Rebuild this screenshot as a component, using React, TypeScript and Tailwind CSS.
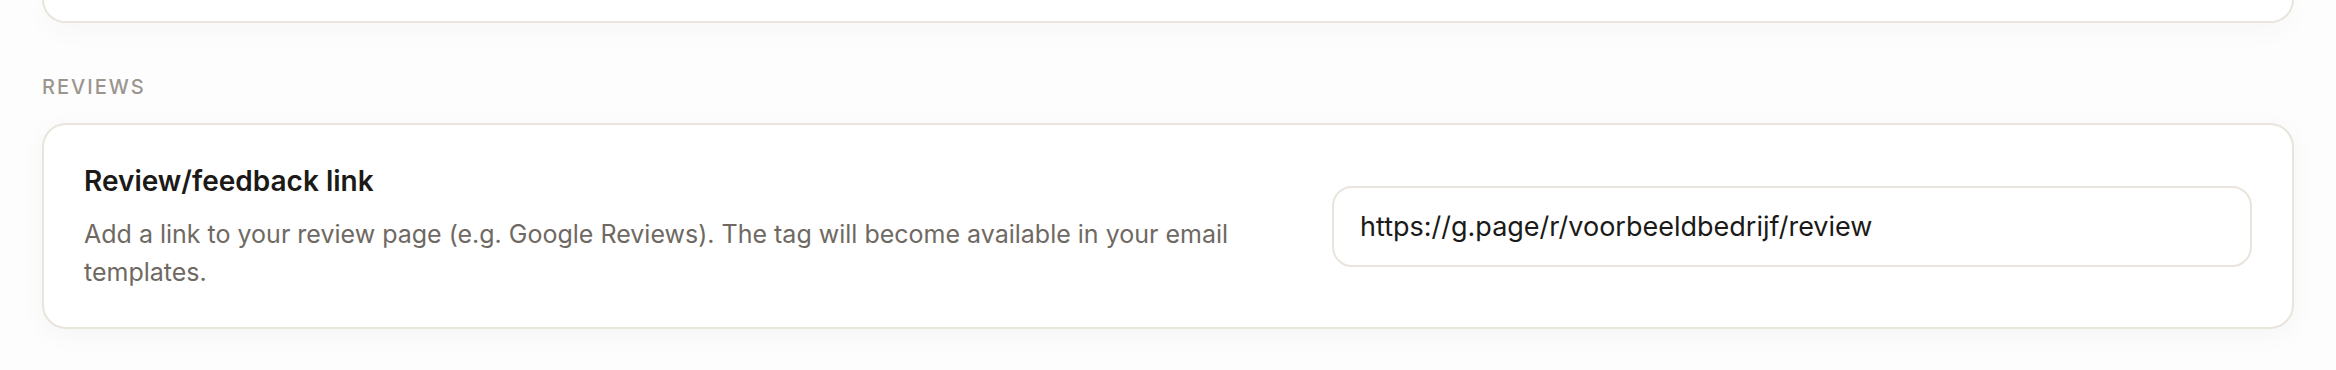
import { useState } from 'react';

const font = { fontFamily: 'Inter, "Liberation Sans", sans-serif' };

export default function App() {
  const [reviewUrl, setReviewUrl] = useState('https://g.page/r/voorbeeldbedrijf/review');

  return (
    <div className="min-h-[370px] bg-[#fdfdfd] px-[42px]" style={font}>
      {/* end of the previous section's card */}
      <div className="h-[23px] rounded-b-[24px] border-x-2 border-b-2 border-[#e9e4dc] bg-white shadow-[0_6px_28px_rgba(0,0,0,0.035)]" />

      <div className="pt-[49px]">
        <h2 className="text-[20px] leading-[30px] font-medium uppercase tracking-[0.1em] text-[#9b958e]">
          Reviews
        </h2>

        <div className="mt-[21px] flex items-center gap-[40px] rounded-[24px] border-2 border-[#e9e4dc] bg-white px-[40px] py-[36px] shadow-[0_6px_28px_rgba(0,0,0,0.035)]">
          <div className="flex-1">
            <h3 className="text-[28px] leading-[40px] font-semibold text-[#1b1a18]">
              Review/feedback link
            </h3>
            <p className="mt-[14px] text-[25px] leading-[38px] text-[#6f6963]">
              Add a link to your review page (e.g. Google Reviews). The tag will become available in your email
              templates.
            </p>
          </div>
          <input
            value={reviewUrl}
            onChange={(e) => setReviewUrl(e.target.value)}
            className="h-[81px] w-[920px] rounded-[20px] border-2 border-[#e9e4dc] bg-white px-[26px] text-[27px] text-[#1b1a18] outline-none"
            style={font}
          />
        </div>
      </div>
    </div>
  );
}
